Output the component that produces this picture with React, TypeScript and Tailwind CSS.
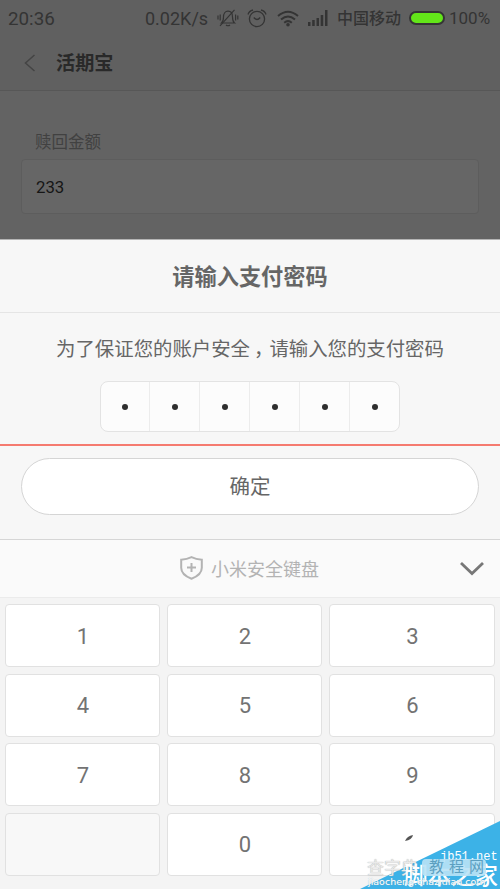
import clsx from 'clsx'

const KEYS = ['1', '2', '3', '4', '5', '6', '7', '8', '9', '', '0', 'delete']

function MutedBellIcon() {
  return (
    <svg width="22" height="18" viewBox="0 0 22 18" fill="none" stroke="currentColor" strokeWidth="1.2">
      <path d="M4.500 14c1.800-1.400 2-3 2-6 0-3.500 1.700-5.800 4.500-5.800s4.500 2.300 4.500 5.800c0 3 .2 4.600 2 6z" />
      <path d="M9 16q2 1.500 4 0M3 16.800 17.500.8M1 6.500v4M3.200 5.500v6M20.800 6.500v4M18.600 5.500v6" />
    </svg>
  )
}

function AlarmIcon() {
  return (
    <svg width="20" height="19" viewBox="0 0 20 19" fill="none" stroke="currentColor" strokeWidth="1.3">
      <circle cx="10" cy="10" r="7.600" />
      <path d="M1 5.500Q2 2 6 1M19 5.500Q18 2 14 1M6.800 8.500q3.200 4 6.400 0" />
    </svg>
  )
}

function WifiIcon() {
  return (
    <svg width="22" height="17" viewBox="0 0 22 17" fill="none" stroke="currentColor" strokeWidth="2">
      <path d="M1 6q10-8.500 20 0M4 9.500q7-6 14 0M7.200 12.700q3.800-3.200 7.600 0" />
      <circle cx="11" cy="14.800" r="1.800" fill="currentColor" stroke="none" />
    </svg>
  )
}

function SignalIcon() {
  return (
    <svg width="20" height="16" viewBox="0 0 20 16" fill="currentColor">
      <path d="M0 12h2.500v4H0zM4.200 10h2.500v6H4.200zM8.500 8H11v8H8.500zM12.700 5h2.500v11h-2.500zM17 0h2.500v16H17z" />
    </svg>
  )
}

function StatusBar() {
  return (
    <div className="flex h-9 items-center pr-2 pl-2 text-[18px] text-[#343434]">
      <span className="w-[137px] pt-0.5 text-[18.800px]">20:36</span>
      <span className="w-[72px] whitespace-nowrap">0.02K/s</span>
      <MutedBellIcon />
      <span className="ml-2 w-[30px]">
        <AlarmIcon />
      </span>
      <span className="w-[31px]">
        <WifiIcon />
      </span>
      <span className="w-[29px]">
        <SignalIcon />
      </span>
      <span className="w-[72px] pt-0.5 text-[16px] font-medium whitespace-nowrap">中国移动</span>
      <span className="h-[14px] w-9 shrink-0 rounded-full border-2 border-[#353535] bg-[#63e619]" />
      <span className="ml-1 pt-0.5 text-[17px]">100%</span>
    </div>
  )
}

function PasswordSheet() {
  return (
    <section className="flex h-[300px] flex-col items-center border-t border-[#b5b5b5] bg-[#f7f7f7] text-[#666]">
      <h2 className="flex h-[73px] w-full items-center justify-center border-b border-[#e5e5e5] pt-1 text-[22.200px] font-bold">
        请输入支付密码
      </h2>
      <p className="mt-[21px] h-[31px] text-[19.400px] leading-8 whitespace-nowrap">
        为了保证您的账户安全<span className="relative left-1">，</span>请输入您的支付密码
      </p>
      <div className="mt-4 flex h-[51px] w-[300px] shrink-0 rounded-lg border border-[#e3e3e3] bg-[#fcfcfc]">
        {Array.from({ length: 6 }, (_, i) => (
          <span
            key={i}
            className="flex w-[50px] items-center justify-center border-r border-[#ececec] pt-px first:w-[49px] last:w-[49px] last:border-r-0"
          >
            <i className="size-[6px] rounded-full bg-[#2e2e2e]" />
          </span>
        ))}
      </div>
      <div className="mt-3 h-[2px] w-full shrink-0 bg-[#f57b70]" />
      <button className="mt-3 h-[57px] w-[458px] shrink-0 rounded-full border border-[#d5d5d5] bg-white pt-0.5 text-[20.500px]">
        确定
      </button>
    </section>
  )
}

function Watermark() {
  return (
    <div className="absolute right-0 bottom-0 h-[69px] w-[140px] overflow-hidden text-white">
      <svg className="absolute inset-0" width="140" height="69" viewBox="0 0 140 69">
        <path d="M0 69 140 1v68z" fill="#3cb2e7" />
      </svg>
      <span className="absolute top-[29px] left-[80px] font-['Liberation_Mono'] text-[12px] leading-4 whitespace-nowrap">
        jb51.net
      </span>
      <span className="absolute top-[34px] left-[7px] text-[17px] leading-7 whitespace-nowrap text-[#e9e9e9] [text-shadow:0_0_1px_#999]">
        查字典
      </span>
      <span className="absolute top-[42px] left-[44px] text-[23.500px] leading-7 font-medium whitespace-nowrap">
        脚本之家
      </span>
      <span className="absolute top-[39px] left-[62px] flex h-[17px] w-[64px] items-center justify-between rounded bg-[#b9e2f5]/90 pr-0.5 pl-[7px] text-[15px] text-[#5c9fc0]">
        <i className="not-italic">教</i>
        <i className="not-italic">程</i>
        <i className="not-italic">网</i>
      </span>
      <span className="absolute top-[56px] left-[8px] font-['DejaVu_Sans'] text-[9.500px] leading-3 whitespace-nowrap [text-shadow:0_0_1px_#8ab]">
        jiaocheng.chazidian.com
      </span>
    </div>
  )
}

function Keyboard() {
  return (
    <section className="h-[350px] bg-[#f4f4f4]">
      <div className="flex h-[59px] items-center border-y border-t-[#d6d6d6] border-b-[#ebebeb] bg-[#fafafa] pr-4 pl-[180px] text-[#b3b3b3]">
        <svg width="23" height="24" viewBox="0 0 23 24" className="-mt-0.5" fill="none" stroke="currentColor" strokeWidth="2">
          <path d="M11.500 1.200Q7 3.500 1.200 3.700v8q0 7 10.300 11 10.300-4 10.300-11v-8Q16 3.500 11.500 1.200zM11.500 7v9M7 11.500h9" />
        </svg>
        <span className="ml-2 flex-1 pt-0.5 text-[18px]">小米安全键盘</span>
        <svg width="26" height="15" viewBox="0 0 26 15" className="-mr-px" fill="none" stroke="#777" strokeWidth="2.800">
          <path d="m2 2 11 10.500L24 2" />
        </svg>
      </div>
      <div className="grid grid-cols-[155px_155px_166px] gap-x-[7px] gap-y-[6.500px] px-[5.400px] pt-[6px]">
        {KEYS.map((key, i) => (
          <div
            key={i}
            className={clsx(
              'flex h-[63px] items-center justify-center rounded border border-[#e1e1e1] pt-px text-[22px] text-[#737373]',
              key ? 'bg-white' : 'bg-[#f8f8f8]',
            )}
          >
            {key === 'delete' ? (
              <svg width="10" height="8" viewBox="0 0 10 8" className="mb-3.5 -ml-1.5">
                <path d="M1 7Q3 2 9 1 8 6 1 7z" fill="#555" />
              </svg>
            ) : (
              key
            )}
          </div>
        ))}
      </div>
    </section>
  )
}

export default function App() {
  return (
    <main className="relative h-[889px] w-[500px] overflow-hidden bg-[#636363] font-[Roboto,'Noto_Sans_CJK_SC',sans-serif]">
      <div className="h-[239px]">
        <header className="h-[91px] border-b border-[#575757] bg-[#606060]">
          <StatusBar />
          <div className="flex h-[53px] items-center pl-6 text-[#292929]">
            <svg width="12" height="18" viewBox="0 0 12 18" fill="none" stroke="#444" strokeWidth="1.500">
              <path d="m10.500 1-9 8 9 8" />
            </svg>
            <h1 className="ml-5 pt-[3px] text-[19.200px] font-bold">活期宝</h1>
          </div>
        </header>
        <div className="px-[21px] pt-[38px]">
          <p className="h-[30px] pt-0.5 pl-[14px] text-[16.500px] leading-6 text-[#414141]">赎回金额</p>
          <div className="flex h-[55px] items-center rounded border border-[#5d5d5d] bg-[#666] pt-0.5 pl-[14px] text-[16.800px] text-[#161616]">
            233
          </div>
        </div>
      </div>
      <PasswordSheet />
      <Keyboard />
      <Watermark />
    </main>
  )
}
